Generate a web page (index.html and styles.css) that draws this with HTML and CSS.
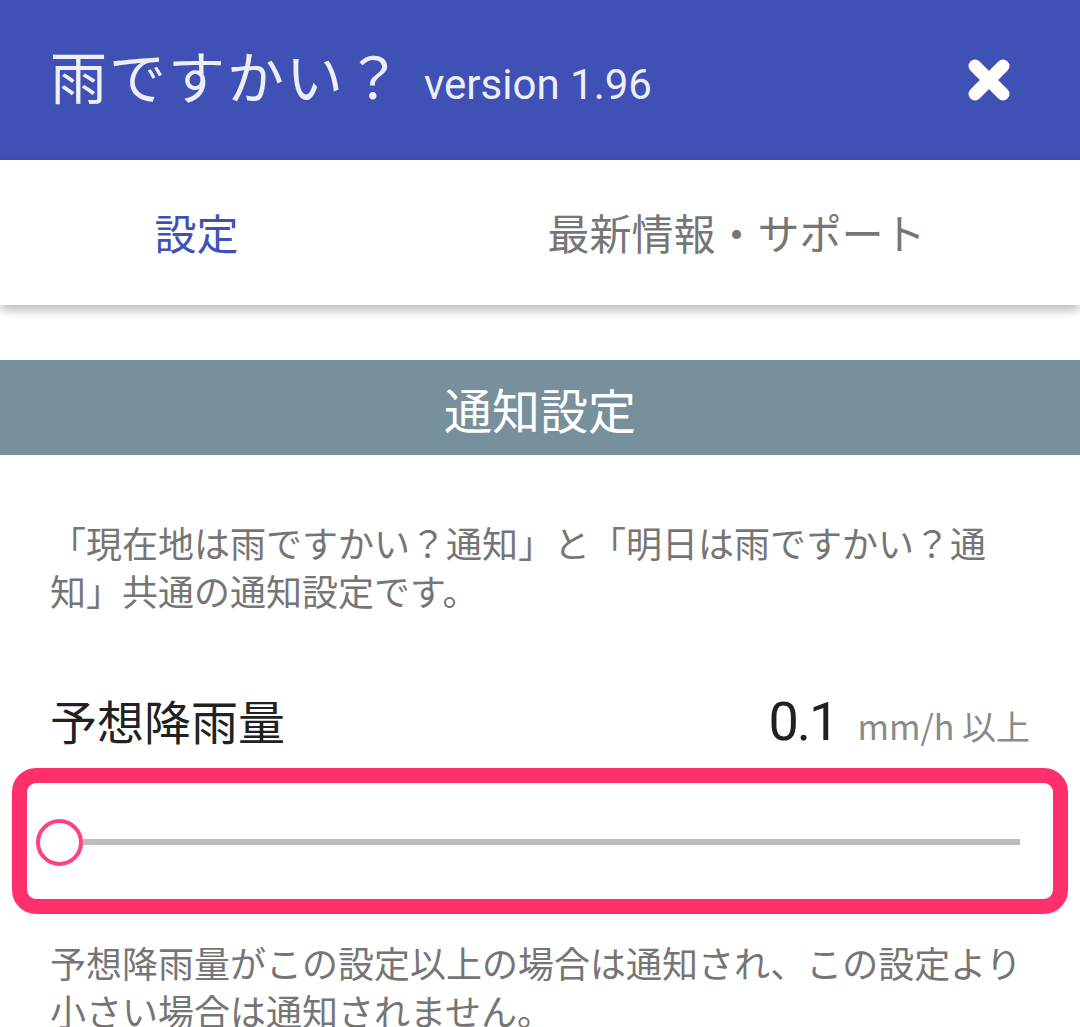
FILE: index.html
```html
<!DOCTYPE html>
<html lang="ja">
<head>
<meta charset="utf-8">
<title>雨ですかい？</title>
<link rel="stylesheet" href="styles.css">
</head>
<body>
<header class="appbar">
  <div class="title">
    <span class="title-main">雨ですかい？</span>
    <span class="title-version">version 1.96</span>
  </div>
  <button class="close" aria-label="閉じる">
    <svg viewBox="0 0 44 44" width="44" height="44">
      <path d="M8 8 L36 36 M36 8 L8 36" stroke="#fff" stroke-width="13" stroke-linecap="round" fill="none"/>
    </svg>
  </button>
</header>
<nav class="tabs">
  <div class="tab active">設定</div>
  <div class="tab">最新情報・サポート</div>
</nav>
<main class="content">
  <h2 class="section-head">通知設定</h2>
  <p class="desc">「現在地は雨ですかい？通知」と「明日は雨ですかい？通知」共通の通知設定です。</p>
  <div class="setting-row">
    <span class="setting-label">予想降雨量</span>
    <span class="setting-value"><span class="num">0.1</span><span class="unit">mm/h 以上</span></span>
  </div>
  <div class="highlight">
    <div class="slider">
      <span class="thumb"></span>
      <span class="track"></span>
    </div>
  </div>
  <p class="desc note">予想降雨量がこの設定以上の場合は通知され、この設定より小さい場合は通知されません。</p>
</main>
</body>
</html>
```
FILE: styles.css
```css
* { box-sizing: border-box; }
html, body { margin: 0; padding: 0; }
body {
  width: 1080px;
  height: 1027px;
  overflow: hidden;
  background: #fff;
  font-family: "Noto Sans CJK JP", "Noto Sans", sans-serif;
}
.appbar {
  height: 160px;
  background: #3F51B5;
  display: flex;
  align-items: center;
  justify-content: space-between;
  padding: 0 69px 12px 50px;
}
.title {
  display: flex;
  align-items: baseline;
  color: #ECEEF8;
}
.title-main {
  font-size: 57px;
  letter-spacing: 2px;
  margin-right: 20px;
}
.title-version {
  font-family: Roboto, "Noto Sans CJK JP", sans-serif;
  font-size: 42px;
}
.close {
  border: 0;
  background: none;
  padding: 0;
  margin-top: 12px;
  width: 44px;
  height: 44px;
  display: flex;
}
.tabs {
  height: 145px;
  display: flex;
  background: #fff;
  box-shadow: 0 5px 10px rgba(0,0,0,0.28);
  position: relative;
}
.tab {
  flex: 1 1 auto;
  display: flex;
  align-items: center;
  justify-content: center;
  font-size: 42px;
  color: #767676;
  padding-bottom: 2px;
}
.tab.active { color: #3F51B5; }
.content { padding-top: 55px; }
.section-head {
  margin: 0;
  height: 95px;
  background: #78909C;
  color: #fff;
  font-weight: normal;
  font-size: 48px;
  display: flex;
  align-items: center;
  justify-content: center;
}
.desc {
  margin: 63px 50px 0;
  font-size: 36px;
  line-height: 48px;
  color: #757575;
}
.setting-row {
  margin: 71px 50px 0;
  display: flex;
  justify-content: space-between;
  align-items: baseline;
}
.setting-label {
  font-size: 47px;
  color: #212121;
}
.setting-value { color: #212121; }
.num {
  font-family: Roboto, sans-serif;
  font-size: 54px;
  letter-spacing: -2px;
}
.unit {
  font-size: 34px;
  color: #8a8a8a;
  margin-left: 20px;
}
.highlight {
  margin: 14px 12px 0;
  height: 146px;
  border: 15px solid #FF2F6C;
  border-radius: 24px;
  display: flex;
  align-items: center;
}
.slider {
  flex: 1;
  display: flex;
  align-items: center;
  padding: 2px 33px 0 9px;
}
.thumb {
  width: 47px;
  height: 47px;
  border-radius: 50%;
  border: 4px solid #FF4081;
  background: #fff;
  flex: none;
}
.track {
  flex: 1;
  height: 6px;
  background: #BDBDBD;
}
.note { margin-top: 24px; }
```
